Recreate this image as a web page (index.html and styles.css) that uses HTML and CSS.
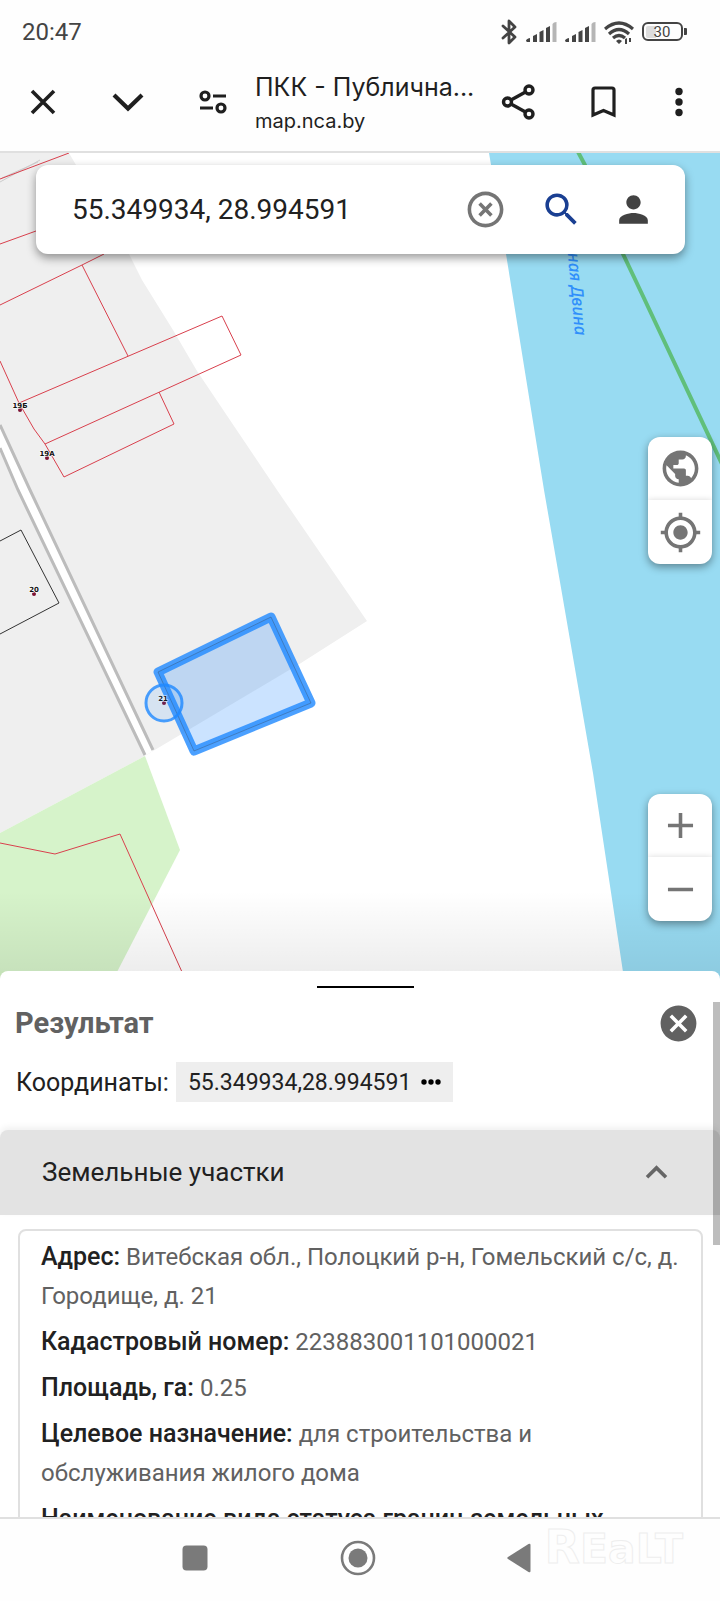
FILE: index.html
```html
<!doctype html>
<html lang="ru">
<head>
<meta charset="utf-8">
<meta name="viewport" content="width=device-width, initial-scale=1">
<title>ПКК - Публичная кадастровая карта</title>
<link rel="stylesheet" href="styles.css">
</head>
<body>
<header class="top">
	<div class="status">
		<time>20:47</time>
		<div class="status-icons">
			<svg width="17" height="26" viewBox="0 0 17 26" fill="none" stroke="#444" stroke-width="2.800" stroke-linejoin="round" stroke-linecap="round"><path d="M2 7l12 11-6 6V2l6 6L2 19"/></svg>
			<svg width="31" height="20" viewBox="0 0 31 20" fill="#444"><path d="M0 19q0-2 4-3v4H1zM7 14l4-2v8H7zM13.500 10l4-2v12h-4zM20 6l4-2v16h-4z"/><path fill="#b5b5b5" d="M26.500 2q1-2 4-2v20h-4z"/></svg>
			<svg width="31" height="20" viewBox="0 0 31 20" fill="#444"><path d="M0 19q0-2 4-3v4H1zM7 14l4-2v8H7zM13.500 10l4-2v12h-4zM20 6l4-2v16h-4z"/><path fill="#b5b5b5" d="M26.500 2q1-2 4-2v20h-4z"/></svg>
			<svg width="30" height="23" viewBox="0 0 30 23" fill="none" stroke="#444" stroke-width="3.200"><path d="M1 8q14-12 28 0M5 13q10-9 20 0M9 17q6-5 12 0"/><path fill="#444" stroke="none" d="M12 20q3-3 6 0l-3 3zM21 18l2-1v6h-2zM25 17h2v4h-2z"/></svg>
			<svg width="46" height="20" viewBox="0 0 46 20"><rect x="1" y="1" width="39" height="17" rx="5" fill="none" stroke="#444" stroke-width="2"/><path fill="#ddd" d="M6 4h8v12H6q-2 0-2-2V6q0-2 2-2z"/><path fill="#444" d="M42 6h2q1 0 1 1v5q0 1-1 1h-2z"/><text class="charge" x="20" y="15" text-anchor="middle">30</text></svg>
		</div>
	</div>
	<div class="bar">
		<button class="bar-btn" aria-label="Закрыть"><svg width="36" height="36" viewBox="0 0 36 36" fill="none" stroke="#1f1f1f" stroke-width="3.600"><path d="M7 7l22 22M29 7L7 29"/></svg></button>
		<button class="bar-btn" aria-label="Свернуть"><svg width="36" height="36" viewBox="0 0 36 36" fill="none" stroke="#1f1f1f" stroke-width="4.200"><path d="M4 11l14 13.500L32 11"/></svg></button>
		<button class="bar-btn" aria-label="Сведения о сайте"><svg width="36" height="36" viewBox="0 0 36 36" fill="none" stroke="#1f1f1f" stroke-width="3.200"><circle cx="10" cy="12" r="4"/><circle cx="26" cy="24" r="4"/><path d="M18 12h13M5 24h13"/></svg></button>
		<div class="site">
			<div class="site-title">ПКК - Публична...</div>
			<div class="site-host">map.nca.by</div>
		</div>
		<button class="bar-btn" aria-label="Поделиться"><svg width="36" height="36" viewBox="0 0 36 36" fill="none" stroke="#1f1f1f" stroke-width="3.400"><circle cx="6.500" cy="18" r="4"/><circle cx="28" cy="6" r="4"/><circle cx="28" cy="30" r="4"/><path d="M10 16l14.500-8M10 20l14.500 8"/></svg></button>
		<button class="bar-btn" aria-label="Закладка"><svg width="36" height="36" viewBox="0 0 36 36" fill="none" stroke="#1f1f1f" stroke-width="3.200"><path d="M7 31V6q0-2 2-2h17q2 0 2 2v25l-10.500-4.500z"/></svg></button>
		<button class="bar-btn bar-more" aria-label="Меню"><svg width="36" height="36" viewBox="0 0 36 36" fill="#1f1f1f"><circle cx="18" cy="7.500" r="3.700"/><circle cx="18" cy="18" r="3.700"/><circle cx="18" cy="28.500" r="3.700"/></svg></button>
	</div>
</header>

<main class="main">
	<section class="map">
		<svg class="map-canvas" viewBox="0 153 720 819" preserveAspectRatio="xMinYMin slice">
			<rect y="153" width="720" height="819" fill="#fff"/>
			<path fill="#efefef" d="M0 153h69l7 12 53 89 13 26 31 50 24 41 80 119 90 131-66 42-148 88-8 5L0 833z"/>
			<path fill="#d6f3ca" d="M145 756l35 94-63 122H0V833z"/>
			<!-- roads -->
			<path fill="#fff" d="M0 425l30 65 123 261-8 5L18 490 0 448z"/>
			<path class="road" d="M0 425l30 65 123 260M0 448l18 42 127 265"/>
			<path class="lane" d="M0 182l40-22M2 178l36-16"/>
			<!-- river -->
			<path fill="#98dbf2" d="M489 153l17 101 38 236 16 92 33 191 30 199h97V153z"/>
			<path fill="none" stroke="#60bf7b" stroke-width="4" d="M577 150l8 15 38 89 19 40 80 170"/>
			<text class="river" transform="translate(575 336) rotate(85)" text-anchor="end">Западная Двина</text>
			<!-- parcels -->
			<path class="parcel" d="M0 179l69-26M0 244l36-13M0 305l82-40 22-11M82 265l46 91M19 403l203-87 19 39L45 444M0 361l19 42 15 26 11 15 19 33 110-53-15-32M0 843l55 11 65-20 62 138"/>
			<path class="parcel old" d="M0 541l21-11 38 73-59 31"/>
			<path class="selected" d="M158 672l113-55 40 86-117 48z"/>
			<path class="parcel old" d="M158 672l113-55 40 86-117 48z" stroke-opacity=".3"/>
			<g class="house" text-anchor="middle">
				<circle cx="20" cy="410" r="2"/><text x="20" y="408">19Б</text>
				<circle cx="47" cy="458" r="2"/><text x="47" y="456">19А</text>
				<circle cx="34" cy="594" r="2"/><text x="34" y="592">20</text>
				<circle cx="164" cy="703" r="2"/><text x="163" y="701">21</text>
			</g>
			<circle class="point" cx="164" cy="703" r="18"/>
		</svg>
		<div class="shade"></div>
		<form class="search">
			<input class="search-input" type="text" value="55.349934, 28.994591" aria-label="Поиск">
			<button class="search-btn clear" type="reset" aria-label="Очистить"><svg class="icon" viewBox="0 0 24 24"><path d="M14.590 8L12 10.590 9.410 8 8 9.410 10.590 12 8 14.590 9.410 16 12 13.410 14.590 16 16 14.590 13.410 12 16 9.410 14.590 8zM12 2C6.470 2 2 6.470 2 12s4.470 10 10 10 10-4.470 10-10S17.530 2 12 2zm0 18c-4.410 0-8-3.590-8-8s3.590-8 8-8 8 3.590 8 8-3.590 8-8 8z"/></svg></button>
			<button class="search-btn find" type="button" aria-label="Найти"><svg class="icon" viewBox="0 0 24 24"><path d="M15.500 14h-.79l-.28-.27A6.471 6.471 0 0 0 16 9.500 6.500 6.500 0 1 0 9.500 16c1.610 0 3.090-.59 4.230-1.570l.27.28v.79l5 4.990L20.490 19l-4.990-5zm-6 0C7.010 14 5 11.990 5 9.500S7.010 5 9.500 5 14 7.010 14 9.500 11.990 14 9.500 14z"/></svg></button>
			<button class="search-btn user" type="button" aria-label="Профиль"><svg class="icon" viewBox="0 0 24 24"><path d="M12 12c2.210 0 4-1.790 4-4s-1.790-4-4-4-4 1.790-4 4 1.790 4 4 4zm0 2c-2.670 0-8 1.340-8 4v2h16v-2c0-2.660-5.330-4-8-4z"/></svg></button>
		</form>
		<div class="tools tools-view">
			<button class="tool" aria-label="Подложка"><svg class="icon" viewBox="0 0 24 24"><path d="M12 2C6.480 2 2 6.480 2 12s4.480 10 10 10 10-4.480 10-10S17.520 2 12 2zm-1 17.930c-3.950-.49-7-3.850-7-7.930 0-.62.08-1.210.21-1.790L9 15v1c0 1.100.9 2 2 2v1.930zm6.900-2.540c-.26-.81-1-1.390-1.900-1.390h-1v-3c0-.55-.45-1-1-1H8v-2h2c.55 0 1-.45 1-1V7h2c1.100 0 2-.9 2-2v-.41c2.930 1.190 5 4.060 5 7.410 0 2.080-.8 3.970-2.100 5.390z"/></svg></button>
			<button class="tool" aria-label="Моё местоположение"><svg class="icon" viewBox="0 0 24 24"><path d="M12 8c-2.210 0-4 1.790-4 4s1.790 4 4 4 4-1.790 4-4-1.790-4-4-4zm8.940 3A8.994 8.994 0 0 0 13 3.060V1h-2v2.060A8.994 8.994 0 0 0 3.060 11H1v2h2.060A8.994 8.994 0 0 0 11 20.940V23h2v-2.060A8.994 8.994 0 0 0 20.940 13H23v-2h-2.060zM12 19c-3.870 0-7-3.130-7-7s3.130-7 7-7 7 3.130 7 7-3.130 7-7 7z"/></svg></button>
		</div>
		<div class="tools tools-zoom">
			<button class="tool" aria-label="Приблизить"><svg class="icon" viewBox="0 0 24 24"><path d="M19 13h-6v6h-2v-6H5v-2h6V5h2v6h6v2z"/></svg></button>
			<button class="tool" aria-label="Отдалить"><svg class="icon" viewBox="0 0 24 24"><path d="M19 13H5v-2h14v2z"/></svg></button>
		</div>
	</section>

	<section class="panel">
		<div class="grip"></div>
		<div class="panel-head">
			<h2>Результат</h2>
			<button class="panel-close" aria-label="Закрыть результат"><svg class="icon" viewBox="0 0 24 24"><path d="M12 2C6.470 2 2 6.470 2 12s4.470 10 10 10 10-4.470 10-10S17.530 2 12 2zm5 13.590L15.590 17 12 13.410 8.410 17 7 15.590 10.590 12 7 8.410 8.410 7 12 10.590 15.590 7 17 8.410 13.410 12 17 15.590z"/></svg></button>
		</div>
		<div class="coords">
			<span>Координаты:</span>
			<button class="chip">55.349934,28.994591<svg width="20" height="6" viewBox="0 0 20 6"><circle cx="3" cy="3" r="2.700"/><circle cx="10" cy="3" r="2.700"/><circle cx="17" cy="3" r="2.700"/></svg></button>
		</div>
		<button class="group" aria-expanded="true">
			Земельные участки
			<svg class="icon" viewBox="0 0 24 24"><path d="M12 8l-6 6 1.410 1.410L12 10.830l4.590 4.580L18 14z"/></svg>
		</button>
		<div class="card">
			<p><b>Адрес:</b> Витебская обл., Полоцкий р-н, Гомельский с/с, д. Городище, д. 21</p>
			<p><b>Кадастровый номер:</b> 223883001101000021</p>
			<p><b>Площадь, га:</b> 0.25</p>
			<p><b>Целевое назначение:</b> для строительства и обслуживания жилого дома</p>
			<p><b>Наименование вида статуса границ земельных</b></p>
		</div>
		<div class="thumb"></div>
	</section>
</main>

<nav class="nav">
	<button class="nav-btn" aria-label="Недавние"><svg width="36" height="36" viewBox="0 0 36 36" fill="#7a7a7a"><rect x="5.500" y="5.500" width="25" height="25" rx="4"/></svg></button>
	<button class="nav-btn" aria-label="Домой"><svg width="36" height="36" viewBox="0 0 36 36" fill="#7a7a7a"><circle cx="18" cy="18" r="16" fill="none" stroke="#7a7a7a" stroke-width="2.600"/><circle cx="18" cy="18" r="9.500"/></svg></button>
	<button class="nav-btn" aria-label="Назад"><svg width="36" height="36" viewBox="0 0 36 36" fill="#7a7a7a"><path d="M5 17q-1.500 1 0 2l20.500 13q2 1 2-1V5q0-2-2-1z"/></svg></button>
	<div class="mark">R<span>EaLT</span></div>
</nav>
</body>
</html>
```
FILE: styles.css
```css
*{box-sizing:border-box;}
html,body{height:100%;}
body{margin:0;display:flex;flex-direction:column;overflow:hidden;background:#fefefe;color:#212121;font:24px/39px Roboto,"Liberation Sans",sans-serif;}
button{margin:0;padding:0;border:0;background:none;color:inherit;font:inherit;display:flex;align-items:center;justify-content:center;cursor:pointer;}
svg{display:block;flex:none;}
.icon{width:43px;height:43px;fill:currentColor;}

/* system status + browser bar */
.top{border-bottom:2px solid #e0e0e0;}
.status{height:52px;padding:12px 32px 0 22px;display:flex;align-items:center;justify-content:space-between;color:#444;}
.status-icons{display:flex;align-items:center;gap:8px;}
.charge{font-size:15px;fill:#444;}
.bar{height:99px;padding-right:8px;display:flex;align-items:center;}
.bar-btn{width:85px;height:64px;flex:none;}
.bar-more{width:66px;}
.site{flex:1;min-width:0;padding-top:4px;font-family:Inter,Roboto,sans-serif;white-space:nowrap;color:#1f1f1f;}
.site-title{font-size:25px;line-height:34px;}
.site-host{font-size:20px;line-height:34px;}

.main{flex:1;min-height:0;display:flex;flex-direction:column;background:linear-gradient(90deg,#c5e2b7 50%,#8bcde4 50%);}

/* map */
.map{flex:3 1 0;min-height:0;position:relative;overflow:hidden;}
.map-canvas{width:100%;height:100%;}
.road{fill:none;stroke:#bcbcbc;stroke-width:3;}
.lane{fill:none;stroke:#ccc;stroke-width:1;}
.river{font:italic 500 17px "Noto Sans",sans-serif;fill:#2f8ffb;}
.parcel{fill:none;stroke:#d9404d;stroke-width:1;}
.parcel.old{stroke:#333;}
.selected{fill:#1e88ff;fill-opacity:.23;stroke:#1e88ff;stroke-opacity:.8;stroke-width:9;stroke-linejoin:round;}
.house{font:bold 7px "DejaVu Sans",sans-serif;fill:#111;}
.house text{stroke:#fff;stroke-width:1;paint-order:stroke;}
.house circle{fill:#7c1233;}
.point{fill:#1e88ff;fill-opacity:.12;stroke:#1e88ff;stroke-opacity:.8;stroke-width:3;}
.shade{position:absolute;left:0;right:0;bottom:0;height:80px;background:linear-gradient(rgba(0,0,0,0),rgba(0,0,0,.07));pointer-events:none;}
.search{position:absolute;top:12px;left:36px;right:35px;height:89px;padding:0 16px 0 36px;display:flex;align-items:center;background:#fff;border-radius:12px;box-shadow:0 4px 10px rgba(0,0,0,.4);}
.search-input{flex:1;min-width:0;height:60px;padding:0;border:0;outline:0;background:none;color:#212121;font:28px Roboto,sans-serif;}
.search-btn{width:72px;height:72px;flex:none;}
.clear{width:80px;color:#757575;}
.find{color:#1a3f92;}
.user{color:#424242;}
.tools{position:absolute;right:8px;width:64px;overflow:hidden;background:#fff;border-radius:12px;box-shadow:0 3px 8px rgba(0,0,0,.4);color:#757575;}
.tools-view{top:284px;}
.tools-zoom{bottom:50px;}
.tool{width:100%;height:63px;}
.tool + .tool{height:64px;box-shadow:0 0 6px rgba(0,0,0,.15);}

/* result panel */
.panel{flex:2 1 0;min-height:0;position:relative;overflow:hidden;background:#fff;border-radius:8px 8px 0 0;}
.grip{width:97px;height:2px;margin:15px 0 0 44%;background:#000;}
.panel-head{height:70px;padding:0 20px 0 15px;display:flex;align-items:center;justify-content:space-between;color:#616161;}
.panel-head h2{margin:0;font-size:29px;font-weight:700;}
.coords{padding:4px 16px 28px;display:flex;align-items:center;gap:7px;font-size:25px;}
.chip{height:40px;padding:0 12px;gap:10px;background:#eee;font-size:23px;}
.group{width:100%;height:85px;padding:0 42px;justify-content:space-between;background:#e3e3e3;border-radius:8px 8px 0 0;box-shadow:0 -3px 6px rgba(0,0,0,.06);font-size:26px;}
.group .icon{color:#666;}
.card{margin:14px 17px 0 18px;padding:7px 21px;border:2px solid #e0e0e0;border-radius:8px;color:#616161;}
.card p{margin:0 0 7px;}
.card b{font-size:25px;line-height:25px;font-weight:500;color:#212121;}
.thumb{position:absolute;top:31px;right:0;width:7px;height:243px;background:rgba(0,0,0,.26);}

/* system navigation */
.nav{position:relative;height:84px;padding:0 4px 5px 0;display:flex;align-items:center;justify-content:center;border-top:2px solid #e0e0e0;background:#fefefe;}
.nav-btn{width:163px;height:64px;}
.mark{position:absolute;right:37px;top:8px;font:bold 46px/40px "DejaVu Sans",sans-serif;color:#fefefe;-webkit-text-stroke:1px #eee;}
.mark span{font-size:41px;}
```
